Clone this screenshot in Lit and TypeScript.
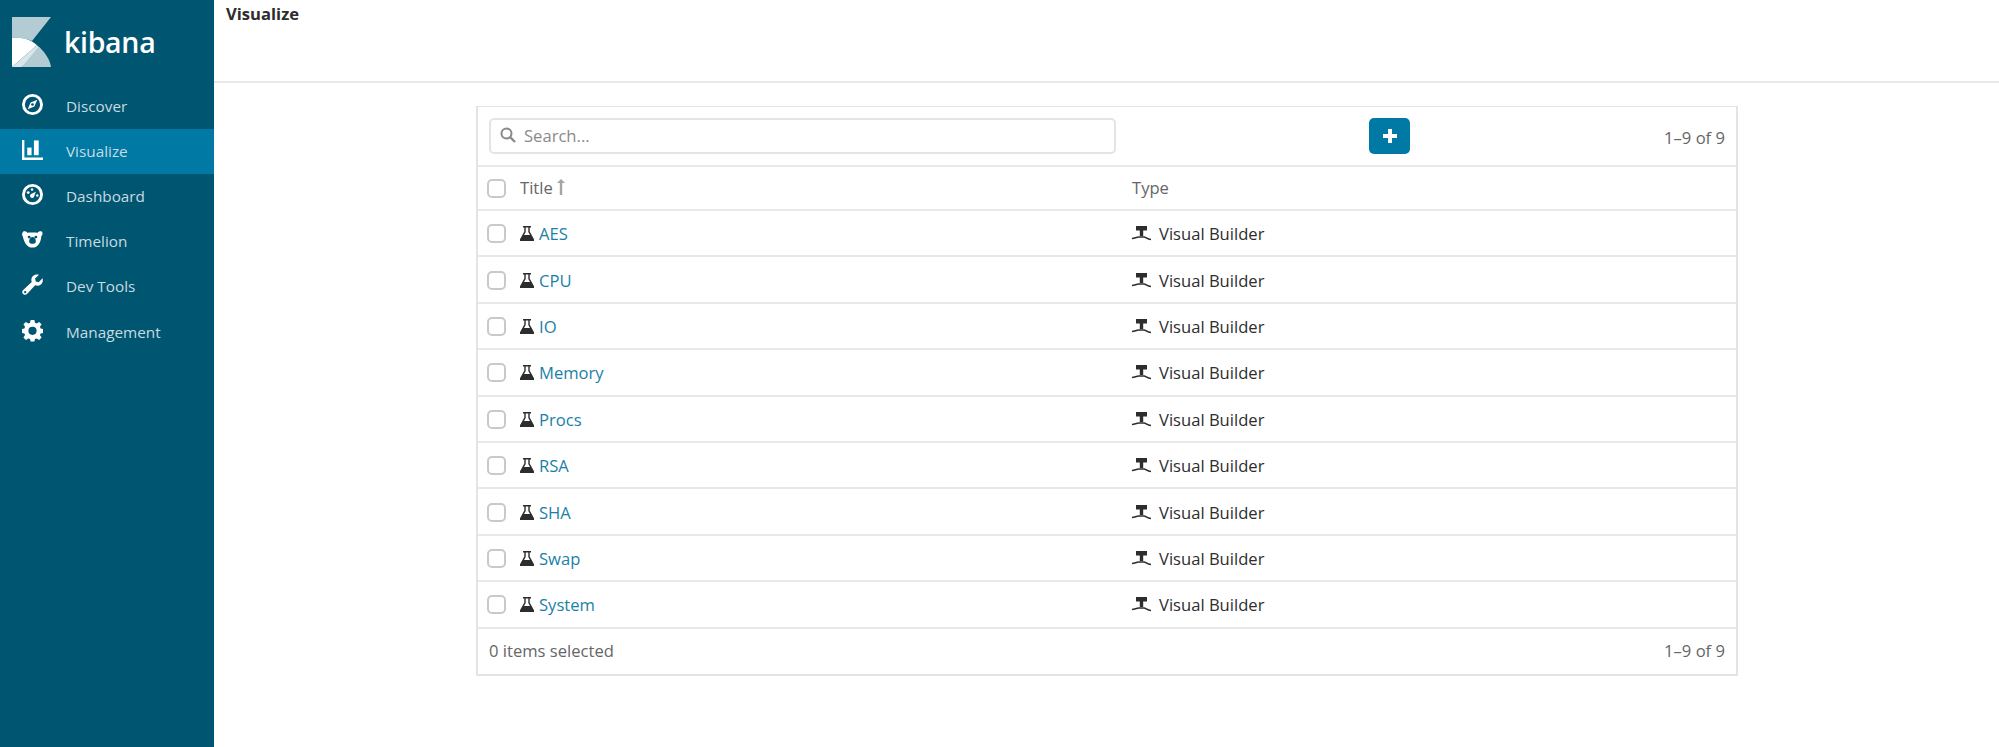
import { LitElement, html, css, svg } from 'lit';
import { customElement } from 'lit/decorators.js';

const NAV = [
  {
    label: 'Discover',
    icon: svg`<path fill-rule="evenodd" d="M11 0a11 11 0 1 1 0 22a11 11 0 0 1 0-22zM11 3a8 8 0 1 0 0 16a8 8 0 0 0 0-16z"/><path d="M16 6l-3 7-7 3 3-7z"/><circle cx="11" cy="11" r="1.4" fill="#005571"/>`,
  },
  {
    label: 'Visualize',
    active: true,
    icon: svg`<path d="M0 1h2.500v18.500H22V22H0z"/><rect x="5.500" y="9" width="4.500" height="8"/><rect x="12.500" y="1.500" width="5" height="15.500"/>`,
  },
  {
    label: 'Dashboard',
    icon: svg`<path fill-rule="evenodd" d="M11 0a11 11 0 1 1 0 22a11 11 0 0 1 0-22zM11 3a8 8 0 1 0 0 16a8 8 0 0 0 0-16z"/><circle cx="6.500" cy="9" r="1.500"/><circle cx="10.500" cy="5.800" r="1.300"/><path d="M9.500 10.500l5-2.500-2 5.500a2.200 2.200 0 1 1-3-3z"/><circle cx="16" cy="12" r="1.300"/>`,
  },
  {
    label: 'Timelion',
    icon: svg`<path fill-rule="evenodd" d="M1 3c2-1 3.500-.5 4.500 1 3.500-.6 7.500-.6 11 0 1-1.500 2.500-2 4.500-1 1 2 .5 3.500-.8 4.500C20 13 17 19.500 11 19.500S2 13 .8 7.500C-.5 6.500 0 5 1 3zM7.500 7a1.500 1.500 0 1 0 0 3a1.500 1.500 0 0 0 0-3zM14.500 7a1.500 1.500 0 1 0 0 3a1.500 1.500 0 0 0 0-3zM11 8.500c-1.800 0-3.500 2-3.500 4.500c0 1.500 1.500 2.500 3.500 2.500s3.500-1 3.500-2.500c0-2.500-1.700-4.500-3.500-4.500z"/>`,
  },
  {
    label: 'Dev Tools',
    icon: svg`<path fill-rule="evenodd" d="M21.500 4.500c.8 2.500.2 5-1.700 6.500c-1.700 1.400-4 1.600-6 .8L5.500 20.800c-1.200 1.300-3.200 1.400-4.400.2c-1.200-1.200-1.100-3.100.1-4.300l9-8.300c-.8-2-.5-4.400 1-6.100C12.800.7 15.300 0 17.800.7l-4.100 4.100.7 3 3 .8zM3.300 17.800a1.200 1.200 0 1 0 .1 2.400a1.200 1.200 0 0 0-.1-2.400z"/>`,
  },
  {
    label: 'Management',
    icon: svg`<path fill-rule="evenodd" d="M9 0h4l.6 3 1.700.7L18 2l2.500 2.500-1.700 2.600.7 1.700L22 9.500v4l-2.500.6-.7 1.700 1.700 2.600L18 21l-2.700-1.700-1.700.7L13 22.500H9l-.6-2.500-1.700-.7L4 21l-2.500-2.600 1.700-2.600-.7-1.700L0 13.500v-4l2.500-.7.7-1.700L1.500 4.500 4 2l2.700 1.700 1.700-.7zM11 7a4.300 4.300 0 1 0 0 8.600a4.300 4.300 0 0 0 0-8.600z"/>`,
  },
];

const ROWS = ['AES', 'CPU', 'IO', 'Memory', 'Procs', 'RSA', 'SHA', 'Swap', 'System'];

const flask = html`<svg class="flask" viewBox="0 0 14 15" width="14" height="15">
  <path fill="#2d2d2d" fill-rule="evenodd" d="M3 0h8v1.500H9.700v4L14 13.200V15H0v-1.800L4.300 5.500v-4H3zM5.700 1.500v4.400L4 9h6L8.300 5.900V1.500z"/>
</svg>`;

const builder = html`<svg class="builder" viewBox="0 0 19 15" width="19" height="15">
  <path fill="#2d2d2d" d="M4 0h11v4.500h-3.800V10H7.800V4.500H4z"/>
  <path fill="none" stroke="#2d2d2d" stroke-width="1.600" d="M0 12.500c3 0 4-1.500 7-1.500h5c2 0 3 2.500 7 2.500"/>
</svg>`;

@customElement('app-root')
export class AppRoot extends LitElement {
  static styles = css`
    :host {
      display: flex;
      height: 747px;
      font-family: 'Open Sans', sans-serif;
      font-size: 16.600px;
      color: #2d2d2d;
      background: #fff;
    }

    .side {
      width: 214px;
      flex: none;
      background: #005571;
    }

    .brand {
      display: flex;
      align-items: center;
      height: 84px;
      padding-left: 12px;
      box-sizing: border-box;
      gap: 13px;
    }

    .brand span {
      color: #fff;
      font-size: 28.500px;
      font-weight: 600;
      line-height: 1;
      letter-spacing: -0.3px;
    }

    .nav-item {
      display: flex;
      align-items: center;
      height: 45.200px;
      padding: 0 0 2px 22px;
      box-sizing: border-box;
      gap: 23px;
      font-size: 15.300px;
      color: #c8dbe1;
    }

    .nav-item svg {
      fill: #fff;
      overflow: visible;
      flex: none;
      margin-top: -3px;
    }

    .nav-item.active {
      background: #0079a5;
    }

    .main {
      flex: 1;
      min-width: 0;
    }

    .top {
      height: 83px;
      padding: 3px 12px 0;
      box-sizing: border-box;
      border-bottom: 2px solid #e8e8e8;
      font-weight: 700;
      line-height: 22px;
    }

    .table {
      margin: 23px 0 0 262px;
      width: 1262px;
      box-sizing: border-box;
      border: 2px solid #e4e4e4;
      border-top-width: 1px;
    }

    .toolbar {
      display: grid;
      grid-template-columns: 627px 253px 41px 1fr;
      align-items: center;
      height: 58px;
      padding: 0 11px;
      box-sizing: border-box;
      color: #666;
    }

    .search {
      grid-column: 1;
      display: flex;
      align-items: center;
      gap: 8px;
      height: 36px;
      padding: 0 0 2px 9px;
      box-sizing: border-box;
      border: 2px solid #e4e4e4;
      border-radius: 5px;
      color: #8a8a8a;
    }

    .add {
      grid-column: 3;
      height: 36px;
      border-radius: 5px;
      background: #0079a5;
      display: flex;
      align-items: center;
      justify-content: center;
    }

    .count {
      grid-column: 4;
      justify-self: end;
      margin-top: 3px;
    }

    .row {
      display: grid;
      grid-template-columns: 19px 598px 1fr;
      column-gap: 14px;
      align-items: center;
      padding: 1px 0 0 9px;
      height: 46.400px;
      box-sizing: border-box;
      border-top: 2px solid #e8e8e8;
    }

    .row.head {
      height: 44px;
      padding-top: 0;
      color: #666;
    }

    .head .cell {
      margin-top: -2px;
    }

    .check {
      width: 19px;
      height: 19px;
      box-sizing: border-box;
      border: 2px solid #c9c9c9;
      border-radius: 5px;
    }

    .cell {
      display: flex;
      align-items: center;
    }

    .flask {
      margin-right: 5px;
    }

    .builder {
      margin-right: 8px;
    }

    a {
      color: #1a7fa8;
      text-decoration: none;
    }

    .arrow {
      margin-left: 4px;
    }

    .foot {
      display: flex;
      justify-content: space-between;
      align-items: center;
      height: 47.500px;
      padding: 0 11px 2px;
      box-sizing: border-box;
      border-top: 2px solid #e8e8e8;
      color: #666;
    }
  `;

  render() {
    return html`
      <div class="side">
        <div class="brand">
          <svg viewBox="0 0 39 50" width="39" height="50">
            <path fill="#b3cbd3" d="M0 0h39L20 24C13 21 7 20.500 0 21z"/>
            <path fill="#fff" d="M0 21c7-.5 14 0 20 3.500c1.800 1 3.500 2.500 5 3.800L0 50z"/>
            <path fill="#dbe6ea" d="M0 50l25-21.700c1.500 1.200 2.700 2.500 3.700 3.700L10 50z"/>
            <path fill="#b3cbd3" d="M26.500 29.800C33 35 38 43 39 50H10z"/>
          </svg>
          <span>kibana</span>
        </div>
        ${NAV.map(
          n => html`
            <div class="nav-item ${n.active ? 'active' : ''}">
              <svg viewBox="0 0 22 22" width="21" height="21">${n.icon}</svg>
              <span>${n.label}</span>
            </div>
          `
        )}
      </div>
      <div class="main">
        <div class="top">Visualize</div>
        <div class="table">
          <div class="toolbar">
            <div class="search">
              <svg viewBox="0 0 16 16" width="16" height="16">
                <circle cx="6.500" cy="6.500" r="5" fill="none" stroke="#8a8a8a" stroke-width="2"/>
                <path d="M10.500 10.500L15 15" stroke="#8a8a8a" stroke-width="2.400"/>
              </svg>
              <span>Search...</span>
            </div>
            <div class="add">
              <svg viewBox="0 0 14 14" width="14" height="14">
                <path fill="#fff" d="M5 0h4v5h5v4H9v5H5V9H0V5h5z"/>
              </svg>
            </div>
            <div class="count">1–9 of 9</div>
          </div>
          <div class="row head">
            <div class="check"></div>
            <div class="cell">
              Title
              <svg class="arrow" viewBox="0 0 8 16" width="8" height="16">
                <path fill="#a5a5a5" d="M4 0l4 4H5.200v12H2.800V4H0z"/>
              </svg>
            </div>
            <div class="cell">Type</div>
          </div>
          ${ROWS.map(
            r => html`
              <div class="row">
                <div class="check"></div>
                <div class="cell">${flask}<a href="#">${r}</a></div>
                <div class="cell">${builder}Visual Builder</div>
              </div>
            `
          )}
          <div class="foot">
            <span>0 items selected</span>
            <span>1–9 of 9</span>
          </div>
        </div>
      </div>
    `;
  }
}
